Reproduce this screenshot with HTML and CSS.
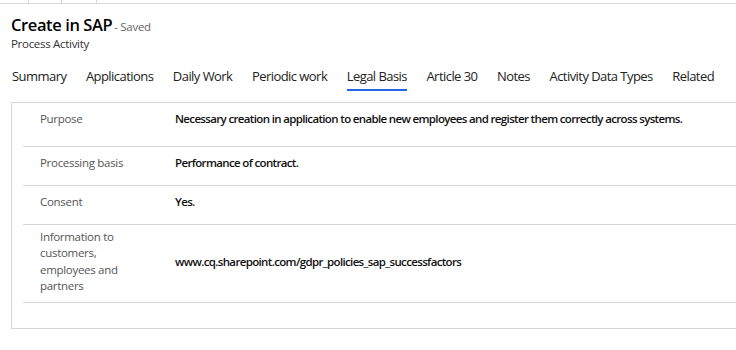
FILE: index.html
```html
<!DOCTYPE html>
<html lang="en">
<head>
    <meta charset="UTF-8">
    <meta name="viewport" content="width=device-width, initial-scale=1.0">
    <title>Create in SAP - Process Activity</title>
    <link rel="stylesheet" href="styles.css">
</head>
<body>
    <div class="top-strip">
        <span class="strip-cell c1"></span>
        <span class="strip-cell c2"></span>
        <span class="strip-cell c3"></span>
    </div>

    <header class="record-header">
        <h1 class="record-title">Create in SAP<span class="save-state">- Saved</span></h1>
        <div class="entity-name">Process Activity</div>
    </header>

    <nav class="tabs">
        <a href="#">Summary</a>
        <a href="#">Applications</a>
        <a href="#">Daily Work</a>
        <a href="#">Periodic work</a>
        <a href="#" class="active">Legal Basis</a>
        <a href="#">Article 30</a>
        <a href="#">Notes</a>
        <a href="#">Activity Data Types</a>
        <a href="#">Related</a>
    </nav>

    <section class="panel">
        <div class="field-row row-tall">
            <div class="field-label">Purpose</div>
            <div class="field-value">Necessary creation in application to enable new employees and register them correctly across systems.</div>
        </div>
        <div class="field-row">
            <div class="field-label">Processing basis</div>
            <div class="field-value">Performance of contract.</div>
        </div>
        <div class="field-row">
            <div class="field-label">Consent</div>
            <div class="field-value">Yes.</div>
        </div>
        <div class="field-row row-center">
            <div class="field-label">Information to customers, employees and partners</div>
            <div class="field-value">www.cq.sharepoint.com/gdpr_policies_sap_successfactors</div>
        </div>
    </section>
</body>
</html>
```

FILE: styles.css
```css
body {
    font-family: "Open Sans", "Noto Sans", sans-serif;
    margin: 0;
    padding: 0;
    background-color: #ffffff;
    color: #000000;
    overflow: hidden;
}
.top-strip {
    display: flex;
    height: 3px;
    border-bottom: 1px solid #d6d6d6;
}
.strip-cell {
    border-right: 1px solid #d6d6d6;
}
.strip-cell.c1 { width: 28px; }
.strip-cell.c2 { width: 32px; }
.strip-cell.c3 { width: 34px; }

.record-header {
    padding: 10px 11px 0;
}
.record-title {
    margin: 0;
    font-size: 16.5px;
    font-weight: 600;
    line-height: 21px;
    letter-spacing: -0.4px;
    color: #000000;
}
.save-state {
    font-size: 11.5px;
    font-weight: 400;
    letter-spacing: -0.3px;
    color: #666666;
    margin-left: 2px;
}
.entity-name {
    font-size: 11.5px;
    line-height: 14px;
    letter-spacing: -0.3px;
    color: #333333;
}

.tabs {
    display: flex;
    gap: 19.5px;
    padding: 16px 12px 0;
    white-space: nowrap;
}
.tabs a {
    flex-shrink: 0;
    text-decoration: none;
    color: #222222;
    font-size: 13px;
    letter-spacing: -0.55px;
    line-height: 18px;
    padding-bottom: 4px;
    border-bottom: 2px solid transparent;
}
.tabs a.active {
    border-bottom-color: #2266e3;
}

.panel {
    margin: 11px 0 0 11px;
    border: 1px solid #d6d6d6;
    border-right: none;
    padding: 0 0 25px 11px;
}
.field-row {
    display: flex;
    border-bottom: 1px solid #d6d6d6;
    padding: 8px 0 14px;
    line-height: 16px;
}
.row-tall {
    padding-bottom: 19px;
}
.row-center {
    align-items: center;
    padding: 4px 0 7px;
}
.row-center .field-label {
    line-height: 16.4px;
}
.field-label {
    flex-shrink: 0;
    width: 95px;
    padding: 0 40px 0 17px;
    font-size: 11.5px;
    letter-spacing: -0.3px;
    color: #555555;
}
.field-value {
    white-space: nowrap;
    font-size: 11.5px;
    font-weight: 600;
    letter-spacing: -0.65px;
    color: #111111;
}
```
